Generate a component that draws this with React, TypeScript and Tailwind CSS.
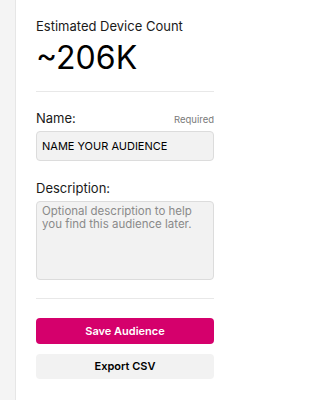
export default function App() {
  return (
    <div className="flex h-[400px] w-[234px] bg-white" style={{ fontFamily: 'Inter, "Noto Sans", sans-serif' }}>
      <div className="w-[16px] shrink-0 border-r border-[#e6e6e6] bg-[#f4f4f4]" />
      <div className="flex flex-1 flex-col px-5 pt-[18px]">
        <div className="text-[13px] leading-[16px] text-[#1a1a1a]">Estimated Device Count</div>
        <div className="mt-[4px] text-[32px] leading-[40px] font-normal text-black">~206K</div>

        <div className="mt-[13px] h-px bg-[#e8e8e8]" />

        <div className="mt-[18px] flex items-baseline justify-between">
          <span className="text-[13px] leading-[16px] text-[#1a1a1a]">Name:</span>
          <span className="text-[9.5px] leading-[16px] text-[#7a7a7a]">Required</span>
        </div>
        <div className="mt-[3px] flex h-[30px] items-center rounded-[4px] border border-[#dcdcdc] bg-[#f2f2f2] px-[5px] text-[11px] text-black">
          NAME YOUR AUDIENCE
        </div>

        <div className="mt-[19px] text-[13px] leading-[16px] text-[#1a1a1a]">Description:</div>
        <div className="mt-[5px] h-[79px] rounded-[4px] border border-[#dcdcdc] bg-[#f2f2f2] pl-[5px] pr-[10px] pt-[3px] text-[11.5px] leading-[13px] text-[#8a8a8a]">
          Optional description to help you find this audience later.
        </div>

        <div className="mt-[18px] h-px bg-[#e8e8e8]" />

        <button className="mt-[19px] h-[26px] rounded-[4px] bg-[#d5006c] text-[11px] font-semibold text-white">
          Save Audience
        </button>
        <button className="mt-[10px] h-[25px] rounded-[4px] bg-[#f2f2f2] text-[11px] font-semibold text-black">
          Export CSV
        </button>
      </div>
    </div>
  )
}
